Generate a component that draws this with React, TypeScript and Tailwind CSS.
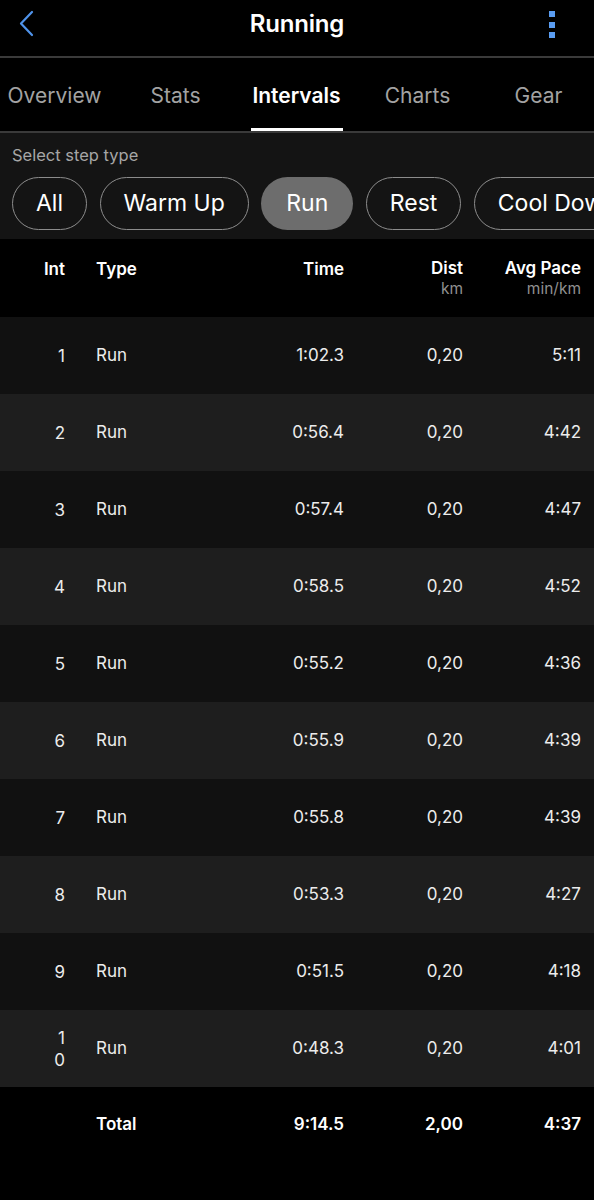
import React from "react";

const rows = [
  { int: "1", type: "Run", time: "1:02.3", dist: "0,20", pace: "5:11" },
  { int: "2", type: "Run", time: "0:56.4", dist: "0,20", pace: "4:42" },
  { int: "3", type: "Run", time: "0:57.4", dist: "0,20", pace: "4:47" },
  { int: "4", type: "Run", time: "0:58.5", dist: "0,20", pace: "4:52" },
  { int: "5", type: "Run", time: "0:55.2", dist: "0,20", pace: "4:36" },
  { int: "6", type: "Run", time: "0:55.9", dist: "0,20", pace: "4:39" },
  { int: "7", type: "Run", time: "0:55.8", dist: "0,20", pace: "4:39" },
  { int: "8", type: "Run", time: "0:53.3", dist: "0,20", pace: "4:27" },
  { int: "9", type: "Run", time: "0:51.5", dist: "0,20", pace: "4:18" },
  { int: "10", type: "Run", time: "0:48.3", dist: "0,20", pace: "4:01" },
];

const tabs = ["Overview", "Stats", "Intervals", "Charts", "Gear"];
const steps = ["All", "Warm Up", "Run", "Rest", "Cool Down"];

const gridCols = "grid grid-cols-[28px_31px_148px_100px_119px_118px] pl-[37px] pr-[13px]";

export default function App() {
  return (
    <div className="w-[594px] h-[1200px] bg-black text-white overflow-hidden font-['Inter','Liberation_Sans',sans-serif]">
      {/* Top bar */}
      <div className="h-[56px] flex items-center justify-between px-[18px] relative">
        <svg width="16" height="28" viewBox="0 0 16 28" className="mt-[-8px]">
          <path d="M14 2 L3 13.5 L14 25" fill="none" stroke="#4f93ea" strokeWidth="2.2" strokeLinecap="round" strokeLinejoin="round" />
        </svg>
        <h1 className="absolute left-0 right-0 top-[9px] text-center text-[24px] leading-[30px] font-semibold tracking-[-0.2px] pointer-events-none">
          Running
        </h1>
        <div className="flex flex-col gap-[4.5px] mr-[21px] mt-[-7px]">
          <span className="w-[6px] h-[6px] bg-[#5a9cf0]" />
          <span className="w-[6px] h-[6px] bg-[#5a9cf0]" />
          <span className="w-[6px] h-[6px] bg-[#5a9cf0]" />
        </div>
      </div>
      <div className="h-[2px] bg-[#3a3a3a]" />

      {/* Tabs */}
      <div className="h-[73px] flex -ml-[6px]">
        {tabs.map((t) => (
          <div key={t} className="w-[121px] shrink-0 flex flex-col items-center">
            <div className="flex-1 flex items-center pt-[6px]">
              <span
                className={
                  t === "Intervals"
                    ? "text-[21px] font-semibold text-white"
                    : "text-[21px] text-[#a3a3a3]"
                }
              >
                {t}
              </span>
            </div>
            <div className={t === "Intervals" ? "h-[3px] w-[92px] bg-white" : "h-[3px]"} />
          </div>
        ))}
      </div>
      <div className="h-[2px] bg-[#3a3a3a]" />

      {/* Step filter */}
      <div className="h-[106px] bg-[#141414] pt-[12px]">
        <div className="px-[12px] text-[16.5px] text-[#a6a6a6] leading-[20px]">Select step type</div>
        <div className="flex gap-[12.5px] pl-[12px] mt-[12px] whitespace-nowrap">
          {steps.map((s) =>
            s === "Run" ? (
              <div key={s} className="h-[53px] px-[25px] rounded-full bg-[#6d6d6d] flex items-center text-[23px] shrink-0">
                {s}
              </div>
            ) : (
              <div key={s} className="h-[53px] px-[23px] rounded-full border-[1.5px] border-[#8c8c8c] flex items-center text-[23px] shrink-0">
                {s}
              </div>
            )
          )}
        </div>
      </div>

      {/* Table header */}
      <div className={`${gridCols} h-[78px] bg-black pt-[18px] text-[17px] font-semibold`}>
        <div className="text-right">Int</div>
        <div />
        <div>Type</div>
        <div className="text-right">Time</div>
        <div className="text-right leading-[22px]">
          Dist
          <div className="text-[15.5px] font-normal text-[#8f8f8f] leading-[20px]">km</div>
        </div>
        <div className="text-right leading-[22px]">
          Avg Pace
          <div className="text-[15.5px] font-normal text-[#8f8f8f] leading-[20px]">min/km</div>
        </div>
      </div>

      {/* Rows */}
      {rows.map((r, i) => (
        <div
          key={r.int}
          className={`${gridCols} h-[77px] items-center text-[17px] text-[#ececec] ${
            i % 2 === 0 ? "bg-[#111111]" : "bg-[#1e1e1e]"
          }`}
        >
          <div className="flex justify-end">
            <span className="w-[12px] break-all text-right leading-[22px]">{r.int}</span>
          </div>
          <div />
          <div>{r.type}</div>
          <div className="text-right">{r.time}</div>
          <div className="text-right">{r.dist}</div>
          <div className="text-right">{r.pace}</div>
        </div>
      ))}

      {/* Total */}
      <div className={`${gridCols} h-[75px] items-center text-[17px] font-semibold bg-black`}>
        <div />
        <div />
        <div>Total</div>
        <div className="text-right">9:14.5</div>
        <div className="text-right">2,00</div>
        <div className="text-right">4:37</div>
      </div>
    </div>
  );
}
